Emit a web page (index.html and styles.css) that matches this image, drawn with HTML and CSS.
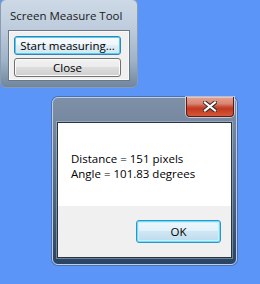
FILE: index.html
```html
<!DOCTYPE html>
<html lang="en">
<head>
  <meta charset="UTF-8" />
  <title>Screen Measure Tool</title>
  <link rel="stylesheet" href="styles.css">
</head>
<body>
  <div class="desktop">
    <div class="window tool-window">
      <div class="titlebar">
        <span class="title">Screen Measure Tool</span>
      </div>
      <div class="client tool-client">
        <button type="button" class="btn btn-default">Start measuring...</button>
        <button type="button" class="btn">Close</button>
      </div>
    </div>

    <div class="window dialog">
      <div class="titlebar">
        <button type="button" class="close-x" aria-label="Close">
          <svg width="14" height="11" viewBox="0 0 14 11">
            <path d="M2 1.5 L12 9.5 M12 1.5 L2 9.5" stroke="#3a2a28" stroke-width="4.2" stroke-linecap="square" fill="none"/>
            <path d="M2 1.5 L12 9.5 M12 1.5 L2 9.5" stroke="#ffffff" stroke-width="2.2" stroke-linecap="square" fill="none"/>
          </svg>
        </button>
      </div>
      <div class="client dialog-client">
        <div class="message">
          <p>Distance = 151 pixels</p>
          <p>Angle = 101.83 degrees</p>
        </div>
        <div class="footer">
          <button type="button" class="btn btn-default btn-ok">OK</button>
        </div>
      </div>
    </div>
  </div>
</body>
</html>
```

FILE: styles.css
```css
body {
  margin: 0;
  font-family: "Open Sans", "Noto Sans", Arial, sans-serif;
  font-size: 11.5px;
  color: #000;
}
.desktop {
  position: relative;
  width: 260px;
  height: 284px;
  overflow: hidden;
  background-color: #5c95f8;
}

/* Window frames */
.window {
  position: absolute;
  box-sizing: border-box;
  display: flex;
  flex-direction: column;
  border-radius: 6px;
}
.titlebar {
  display: flex;
  align-items: center;
  flex-shrink: 0;
}
.client {
  flex: 1;
  display: flex;
  flex-direction: column;
  border: 1px solid #2a3441;
}

/* Inactive tool window */
.tool-window {
  left: 0;
  top: -1px;
  width: 138px;
  height: 89px;
  padding: 0 7px 7px 7px;
  border: 1px solid #8a9cb2;
  background: linear-gradient(180deg, #cdd9e6 0%, #bccbdc 35%, #9fb2c7 70%, #6f869f 100%);
}
.tool-window .titlebar {
  height: 30px;
  padding-left: 2px;
}
.title {
  font-size: 11.5px;
  color: #1a1a1a;
  white-space: nowrap;
}
.tool-client {
  background-color: #f0f0f0;
  border-color: #6b7785;
  box-shadow: inset 0 0 0 1px #fafafa;
  padding: 5px 8px 3px 5px;
  gap: 3px;
}

/* Active dialog */
.dialog {
  left: 52px;
  top: 97px;
  width: 185px;
  height: 168px;
  padding: 0 4px 6px 4px;
  border: 1px solid #c3cdda;
  background: linear-gradient(180deg, #7d90a7 0%, #74879f 18%, #506986 55%, #2a4463 100%);
  box-shadow: 0 0 0 1px rgba(30, 50, 80, 0.35);
}
.dialog .titlebar {
  height: 25px;
  justify-content: flex-end;
  align-items: flex-start;
  margin-right: -2px;
  margin-top: -1px;
}
.dialog-client {
  background-color: #ffffff;
  box-shadow: 0 0 0 1px rgba(190, 205, 225, 0.45);
}
.message {
  flex: 1;
  padding: 28px 0 0 13px;
}
.message p {
  margin: 0;
  line-height: 15px;
  white-space: nowrap;
}
.footer {
  display: flex;
  justify-content: flex-end;
  height: 51px;
  box-sizing: border-box;
  padding: 14px 10px 0 0;
  background-color: #f0f0f0;
}

/* Caption close button */
.close-x {
  width: 48px;
  height: 20px;
  padding: 0;
  display: flex;
  align-items: center;
  justify-content: center;
  border: 1px solid #5a1d16;
  border-top: none;
  border-radius: 0 0 4px 4px;
  background: linear-gradient(180deg, #e3a292 0%, #d98673 35%, #c9523c 50%, #c0391f 62%, #d7583a 100%);
  box-shadow: 0 0 0 1px rgba(255, 255, 255, 0.55), inset 0 1px 0 rgba(255, 255, 255, 0.35);
}

/* Push buttons */
.btn {
  font-family: "Open Sans", "Noto Sans", Arial, sans-serif;
  font-size: 11.5px;
  color: #000;
  height: 19px;
  padding: 0;
  border: 1px solid #707070;
  border-radius: 3px;
  background: linear-gradient(180deg, #f2f2f2 0%, #ebebeb 50%, #dddddd 50%, #cfcfcf 100%);
  box-shadow: inset 0 0 0 1px #fcfcfc;
  line-height: 16px;
}
.btn-default {
  border-color: #3c7fb1;
  box-shadow: inset 0 0 0 1px #48d4f9;
}
.tool-client .btn-default {
  background: linear-gradient(180deg, #f7fbfe 0%, #eff6fb 50%, #e2edf5 50%, #d6e5ef 100%);
}
.btn-ok {
  width: 85px;
  height: 23px;
  line-height: 20px;
  border-color: #2f93c6;
  box-shadow: inset 0 0 0 1px #6fe0fb, inset 0 0 0 2px #c8f0fc;
  background: linear-gradient(180deg, #eef7fc 0%, #e2f1fa 45%, #cfe7f5 50%, #bcd9ea 100%);
}
```
